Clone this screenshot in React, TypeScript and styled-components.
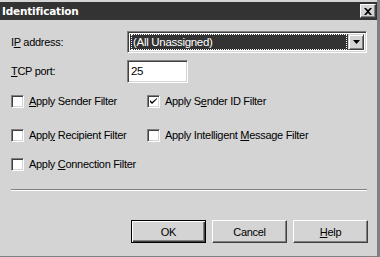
import styled, { createGlobalStyle } from "styled-components";

const GlobalStyle = createGlobalStyle`
  html, body {
    margin: 0;
    padding: 0;
    background: #d4d4d4;
  }
  body {
    font-family: "Liberation Sans", Arial, sans-serif;
    font-size: 11px;
    letter-spacing: -0.3px;
    color: #000;
  }
`;

const checks = [
  [
    { id: "sender", checked: false },
    { id: "senderid", checked: true },
  ],
  [
    { id: "recipient", checked: false },
    { id: "imf", checked: false },
  ],
  [{ id: "connection", checked: false }],
];

const labels: Record<string, JSX.Element> = {
  sender: (
    <>
      <u>A</u>pply Sender Filter
    </>
  ),
  senderid: (
    <>
      Apply S<u>e</u>nder ID Filter
    </>
  ),
  recipient: (
    <>
      Appl<u>y</u> Recipient Filter
    </>
  ),
  imf: (
    <>
      Apply Intelligent <u>M</u>essage Filter
    </>
  ),
  connection: (
    <>
      Apply <u>C</u>onnection Filter
    </>
  ),
};

const App = () => {
  return (
    <>
      <GlobalStyle />
      <Window>
        <TitleBar>
          <Title>Identification</Title>
          <CloseButton>
            <svg width="8" height="7" viewBox="0 0 8 7">
              <path d="M0 0h2l2 2 2-2h2L5 3.5 8 7H6L4 5 2 7H0l3-3.5z" fill="#000" />
            </svg>
          </CloseButton>
        </TitleBar>

        <Body>
          <Form>
            <Label>
              I<u>P</u> address:
            </Label>
            <Combo>
              <ComboValue>
                <span>(All Unassigned)</span>
              </ComboValue>
              <DropButton>
                <svg width="7" height="4" viewBox="0 0 7 4">
                  <path d="M0 0h7L3.5 4z" fill="#000" />
                </svg>
              </DropButton>
            </Combo>

            <Label>
              <u>T</u>CP port:
            </Label>
            <TextInput>25</TextInput>
          </Form>

          <Checks>
            {checks.map((row, r) => (
              <CheckRow key={r}>
                {row.map((c, i) => (
                  <CheckItem key={c.id} $col={i}>
                    <Box>
                      {c.checked && (
                        <svg width="7" height="7" viewBox="0 0 7 7">
                          <path d="M0 2v2l2 2 5-5V0L2 4z" fill="#000" />
                        </svg>
                      )}
                    </Box>
                    <CheckText>{labels[c.id]}</CheckText>
                  </CheckItem>
                ))}
              </CheckRow>
            ))}
          </Checks>

          <Separator />

          <Buttons>
            <Button $default>OK</Button>
            <Button>Cancel</Button>
            <Button>
              <u>H</u>elp
            </Button>
          </Buttons>
        </Body>
      </Window>
    </>
  );
};

const Window = styled.div`
  width: 377px;
  height: 254px;
  padding-top: 2px;
  border-right: 3px solid #808080;
  border-bottom: 1px solid #808080;
  box-sizing: content-box;
  background: #d4d4d4;
  display: flex;
  flex-direction: column;
`;

const TitleBar = styled.div`
  height: 18px;
  background: #333333;
  display: flex;
  align-items: center;
  justify-content: space-between;
  padding: 0 1px 0 2px;
`;

const Title = styled.div`
  color: #fff;
  font-family: "DejaVu Sans", Verdana, sans-serif;
  font-weight: bold;
  font-size: 10.5px;
  letter-spacing: -0.2px;
`;

const CloseButton = styled.div`
  width: 16px;
  height: 14px;
  box-sizing: border-box;
  background: #d4d4d4;
  border: 1px solid;
  border-color: #fff #404040 #404040 #fff;
  box-shadow: inset -1px -1px #808080;
  display: flex;
  align-items: center;
  justify-content: center;
`;

const Body = styled.div`
  padding: 11px 9px 0 11px;
  display: flex;
  flex-direction: column;
`;

const Form = styled.div`
  display: grid;
  grid-template-columns: 116px 1fr;
  row-gap: 7px;
  align-items: center;
  padding-right: 1px;
`;

const Label = styled.div`
  line-height: 13px;
`;

const Combo = styled.div`
  height: 22px;
  box-sizing: border-box;
  border: 1px solid;
  border-color: #808080 #fff #fff #808080;
  box-shadow: inset 1px 1px #404040, inset -1px -1px #d4d4d4;
  background: #fff;
  display: flex;
  padding: 2px;
`;

const ComboValue = styled.div`
  flex: 1;
  background: #333333;
  color: #fff;
  display: flex;
  align-items: center;
  padding: 0 1px;
  font-size: 11.5px;

  span {
    border: 1px dotted #fff;
    flex: 1;
    line-height: 14px;
    padding-left: 1px;
  }
`;

const DropButton = styled.div`
  width: 16px;
  box-sizing: border-box;
  background: #d4d4d4;
  border: 1px solid;
  border-color: #d4d4d4 #404040 #404040 #d4d4d4;
  box-shadow: inset 1px 1px #fff, inset -1px -1px #808080;
  display: flex;
  align-items: center;
  justify-content: center;
`;

const TextInput = styled.div`
  width: 61px;
  height: 23px;
  box-sizing: border-box;
  border: 1px solid;
  border-color: #808080 #fff #fff #808080;
  box-shadow: inset 1px 1px #404040, inset -1px -1px #d4d4d4;
  background: #fff;
  padding: 0 3px;
  line-height: 21px;
  font-size: 11.5px;
`;

const Checks = styled.div`
  margin-top: 12px;
  display: flex;
  flex-direction: column;
  gap: 21px;

  & > :nth-child(2) {
    margin-bottom: -5px;
  }
`;

const CheckRow = styled.div`
  display: flex;
  height: 13px;
`;

const CheckItem = styled.div<{ $col: number }>`
  display: flex;
  align-items: center;
  gap: 5px;
  width: ${({ $col }) => ($col === 0 ? "136px" : "auto")};
`;

const Box = styled.div`
  width: 13px;
  height: 13px;
  box-sizing: border-box;
  background: #fff;
  border: 1px solid;
  border-color: #808080 #fff #fff #808080;
  box-shadow: inset 1px 1px #404040, inset -1px -1px #d4d4d4;
  display: flex;
  align-items: center;
  justify-content: center;
`;

const CheckText = styled.span`
  line-height: 13px;
  white-space: nowrap;
`;

const Separator = styled.div`
  margin-top: 18px;
  margin-right: 1px;
  height: 0;
  border-top: 1px solid #808080;
  border-bottom: 1px solid #fff;
`;

const Buttons = styled.div`
  margin-top: 29px;
  display: flex;
  justify-content: flex-end;
  gap: 6px;
`;

const Button = styled.div<{ $default?: boolean }>`
  width: 75px;
  height: 23px;
  box-sizing: border-box;
  background: #d4d4d4;
  border: 1px solid;
  border-color: ${({ $default }) =>
    $default ? "#000" : "#fff #404040 #404040 #fff"};
  box-shadow: ${({ $default }) =>
    $default
      ? "inset 1px 1px #fff, inset -1px -1px #404040, inset -2px -2px #808080"
      : "inset -1px -1px #808080"};
  display: flex;
  align-items: center;
  justify-content: center;
`;

export default App;
